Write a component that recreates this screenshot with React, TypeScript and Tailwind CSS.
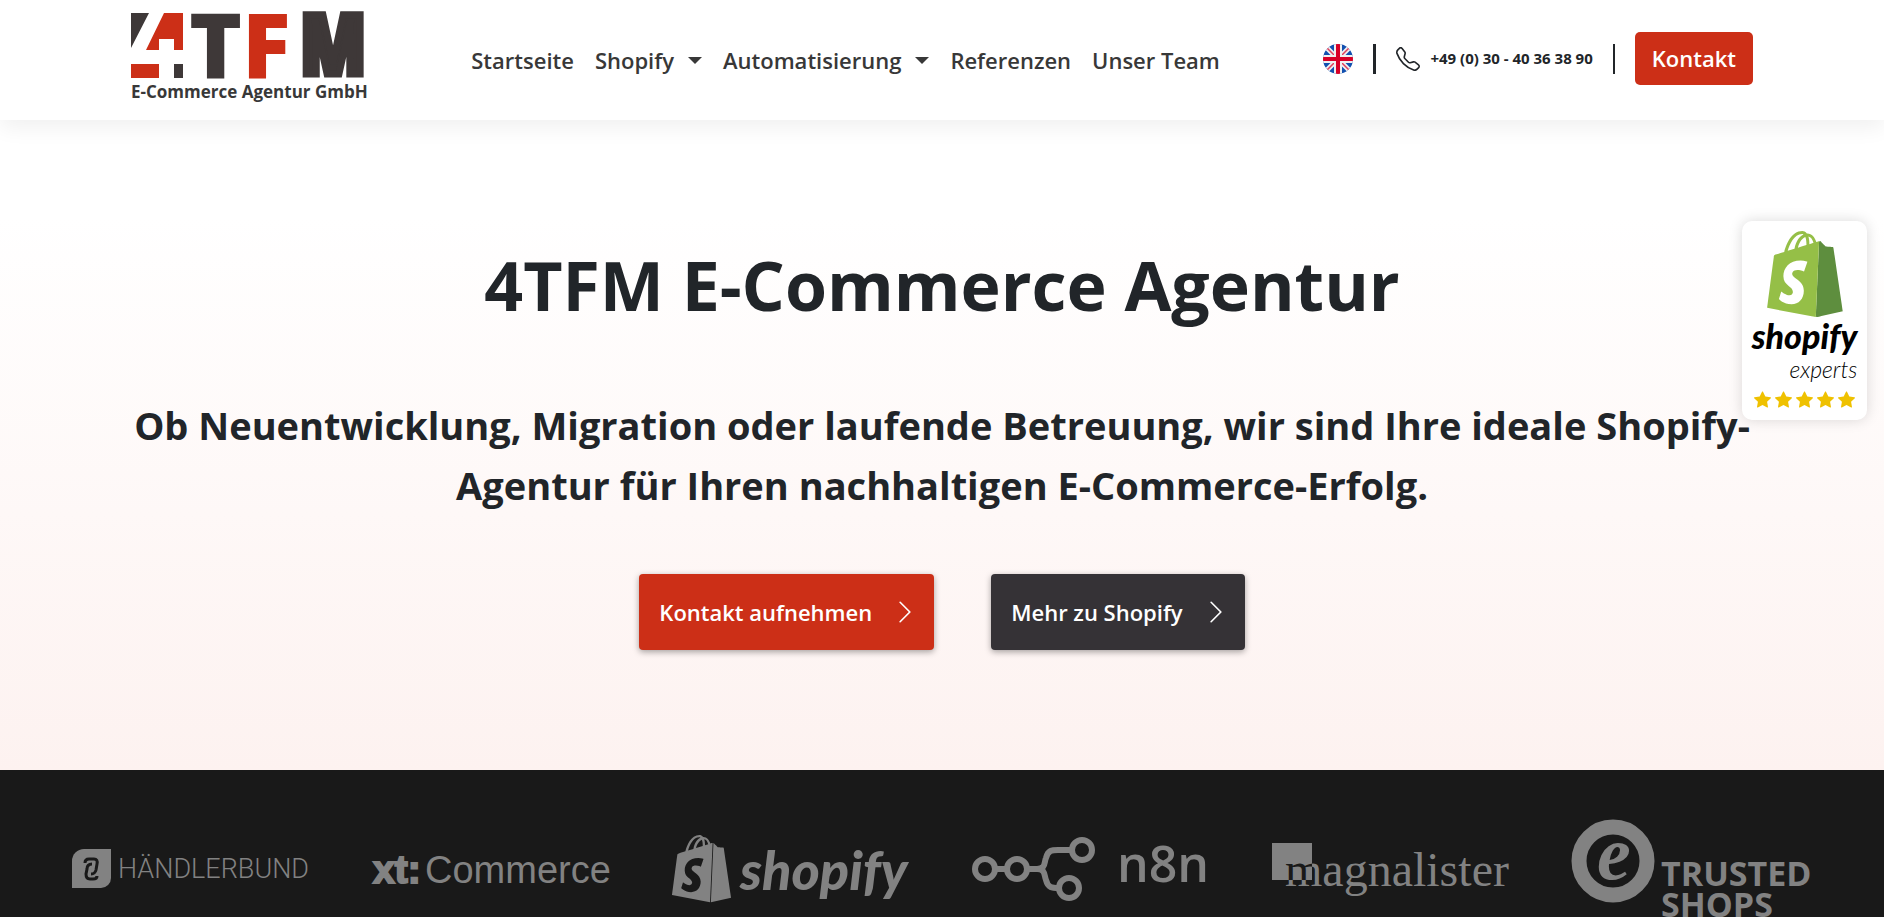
import React from "react"
import { BsTelephone, BsStarFill, BsChevronRight } from "react-icons/bs"

const navItems = [
  { label: "Startseite", dropdown: false },
  { label: "Shopify", dropdown: true },
  { label: "Automatisierung", dropdown: true },
  { label: "Referenzen", dropdown: false },
  { label: "Unser Team", dropdown: false },
]

const BAG_SIDE =
  "M15.337 23.979l7.216-1.561s-2.604-17.613-2.625-17.73c-.018-.116-.114-.192-.211-.192s-1.929-.136-1.929-.136-1.275-1.274-1.439-1.411c-.045-.037-.075-.057-.121-.074l-.914 21.104h.023z"
const BAG_FRONT =
  "M11.71 11.305s-.81-.424-1.774-.424c-1.447 0-1.504.906-1.504 1.141 0 1.232 3.24 1.715 3.24 4.629 0 2.295-1.44 3.76-3.406 3.76-2.354 0-3.54-1.465-3.54-1.465l.646-2.086s1.245 1.066 2.28 1.066c.675 0 .975-.545.975-.932 0-1.619-2.654-1.694-2.654-4.359-.034-2.237 1.571-4.416 4.827-4.416 1.257 0 1.875.361 1.875.361l-.945 2.715-.02.01zM11.17.83c.136 0 .271.038.405.135-.984.465-2.064 1.639-2.508 3.992-.656.213-1.293.405-1.889.578C7.697 3.75 8.951.84 11.17.84V.83zm1.235 2.949v.135c-.754.232-1.583.484-2.394.736.466-1.777 1.333-2.645 2.085-2.971.193.501.309 1.176.309 2.1zm.539-2.234c.694.074 1.141.867 1.429 1.755-.349.114-.735.231-1.158.366v-.252c0-.752-.096-1.371-.271-1.871v.002zm2.992 1.289c-.02 0-.06.021-.078.021s-.289.075-.714.21c-.423-1.233-1.176-2.37-2.508-2.37h-.115C12.135.209 11.669 0 11.265 0 8.159 0 6.675 3.877 6.21 5.846c-1.194.365-2.063.636-2.16.674-.675.213-.694.232-.772.87-.075.462-1.83 14.063-1.83 14.063L15.009 24l.927-21.166z"

function BrandLogo() {
  return (
    <a href="#" className="block shrink-0 text-[#383838]">
      <svg viewBox="0 0 232 65" className="block h-[65px] w-[232px] overflow-visible" role="img" aria-label="4TFM">
        <path d="M0 0H18L0 35ZM43 51h9v14h-9Z" fill="#3e3838" />
        <path d="M33 0H52V37H43V26H28V37H15ZM0 51h28v14H0Z" fill="#cc2f17" />
        <g fontFamily="'Open Sans', sans-serif" fontWeight="800" fontSize="90" fill="#3e3838">
          <text x="58" y="65">T</text>
          <text x="111" y="65" fill="#cc2f17">F</text>
        </g>
        <text
          x="170"
          y="61"
          fontFamily="'Noto Sans Condensed', 'Open Sans Condensed', 'Roboto Condensed', 'Liberation Sans', sans-serif"
          fontWeight="900"
          fontSize="82"
          fill="#3e3838"
          stroke="#3e3838"
          strokeWidth="7"
        >
          M
        </text>
      </svg>
      <span className="block whitespace-nowrap text-[17px] leading-[27px] font-bold">E-Commerce Agentur GmbH</span>
    </a>
  )
}

function UkFlag() {
  return (
    <svg viewBox="0 0 30 30" className="h-[30px] w-[30px]" role="img" aria-label="English">
      <clipPath id="flag-round">
        <circle cx="15" cy="15" r="15" />
      </clipPath>
      <g clipPath="url(#flag-round)">
        <rect width="30" height="30" fill="#1250b0" />
        <path d="M0 0L30 30M30 0L0 30" stroke="#f0f0f0" strokeWidth="5" />
        <path d="M0 0L30 30M30 0L0 30" stroke="#e0405c" strokeWidth="1.5" />
        <path d="M15 0V30M0 15H30" stroke="#f0f0f0" strokeWidth="8" />
        <path d="M15 0V30M0 15H30" stroke="#d80027" strokeWidth="4" />
      </g>
    </svg>
  )
}

function Header() {
  return (
    <header className="relative z-10 bg-white shadow-[0_8px_20px_rgba(0,0,0,0.06)]">
      <div className="mx-auto flex h-[120px] w-full max-w-[1622px] items-center justify-between pb-[3px]">
        <BrandLogo />
        <nav className="flex items-center gap-[21px] pt-[3px] text-[22px] font-semibold text-[#383838]">
          {navItems.map((item) => (
            <a key={item.label} href="#" className="flex items-center gap-[14px] whitespace-nowrap">
              {item.label}
              {item.dropdown && (
                <span className="border-x-[7px] border-t-[7px] border-x-transparent border-t-[#383838]" />
              )}
            </a>
          ))}
        </nav>
        <div className="flex items-center gap-5">
          <a href="#">
            <UkFlag />
          </a>
          <span className="h-[30px] w-[3px] bg-[#212529]" />
          <a href="tel:+493040363890" className="flex items-center gap-[10px] whitespace-nowrap text-[15px] font-bold">
            <BsTelephone className="h-6 w-6" />
            +49 (0) 30 - 40 36 38 90
          </a>
          <span className="h-[30px] w-[2px] bg-[#212529]" />
          <button className="h-[53px] rounded-[5px] bg-[#cc2f17] px-[17px] text-[22px] font-semibold text-white">
            Kontakt
          </button>
        </div>
      </div>
    </header>
  )
}

function Hero() {
  return (
    <section className="bg-linear-to-b from-white from-15% to-[#fdf2f0] text-center">
      <div className="mx-auto flex w-full max-w-[1622px] flex-col items-center pt-[123px] pb-[120px]">
        <h1 className="text-[68px] leading-[84px] font-bold">4TFM E-Commerce Agentur</h1>
        <h2 className="mt-[68px] text-[38px] leading-[60px] font-bold">
          Ob Neuentwicklung, Migration oder laufende Betreuung, wir sind Ihre ideale Shopify-Agentur für Ihren
          nachhaltigen E-Commerce-Erfolg.
        </h2>
        <div className="mt-[59px] flex gap-[57px] text-[22px] font-semibold text-white">
          <button className="flex h-[76px] items-center gap-5 rounded-[4px] bg-[#cc2f17] pr-4 pl-5 shadow-[0_2px_6px_rgba(0,0,0,0.35)]">
            Kontakt aufnehmen
            <BsChevronRight size={26} />
          </button>
          <button className="flex h-[76px] items-center gap-5 rounded-[4px] bg-[#353236] pr-4 pl-5 shadow-[0_2px_6px_rgba(0,0,0,0.35)]">
            Mehr zu Shopify
            <BsChevronRight size={26} />
          </button>
        </div>
      </div>
    </section>
  )
}

function ExpertsBadge() {
  return (
    <aside className="absolute top-[221px] right-[17px] z-20 flex w-[125px] flex-col items-center rounded-[10px] bg-white pt-[10px] pb-3 text-black shadow-[0_0_14px_rgba(0,0,0,0.15)]">
      <svg viewBox="0 0 24 24" className="h-[86px] w-[86px]" aria-hidden="true">
        <path d="M15.009 24L15.936 2.834L16.500 2.900V23.700Z" fill="#5e8e3e" />
        <path d={BAG_FRONT} fill="#95bf47" />
        <path d={BAG_SIDE} fill="#5e8e3e" />
      </svg>
      <div className="flex flex-col items-end font-['Lato',sans-serif] italic">
        <span className="text-[34px] leading-[38px] font-black">shopify</span>
        <span className="text-[23px] leading-7 font-light">experts</span>
      </div>
      <div className="mt-2 flex gap-1 text-[#efc100]">
        {[1, 2, 3, 4, 5].map((n) => (
          <BsStarFill key={n} className="h-[17px] w-[17px]" />
        ))}
      </div>
    </aside>
  )
}

// every partner logo shares one 240x120 canvas
function Partner({ name, children }: { name: string; children: React.ReactNode }) {
  return (
    <li className="px-[30px]">
      <a href="#" aria-label={name}>
        <svg viewBox="0 0 240 120" className="block h-auto w-full overflow-visible fill-[#828282]">
          {children}
        </svg>
      </a>
    </li>
  )
}

function Partners() {
  return (
    <section className="flex-1 border-b border-black bg-[#191919]">
      <ul className="grid grid-cols-6 px-[42px] pt-[40px]">
        <Partner name="Händlerbund">
          <path d="M12 39H39V68A10 10 0 0 1 29 78H0V51A12 12 0 0 1 12 39Z" />
          <path
            d="M13 53Q13 49 17 49H22Q26 49 25 54L24 60Q23 64 19 64"
            fill="none"
            stroke="#191919"
            strokeWidth="3"
          />
          <path
            d="M20 54Q15 54 15 59L14 64Q14 69 18 69H21Q25 69 25 66"
            fill="none"
            stroke="#191919"
            strokeWidth="3"
          />
          <text x="46" y="68" fontFamily="Roboto, sans-serif" fontWeight="300" fontSize="27">
            HÄNDLERBUND
          </text>
        </Partner>
        <Partner name="xt:Commerce">
          <g fontFamily="'Liberation Sans', sans-serif">
            <text x="1" y="73" fontSize="39" fontWeight="700" stroke="#828282" strokeWidth="2">
              xt:
            </text>
            <text x="53" y="73" fontSize="38">
              Commerce
            </text>
          </g>
        </Partner>
        <Partner name="Shopify">
          <g transform="translate(-4 25) scale(2.8)">
            <path d={BAG_FRONT} />
            <path d={BAG_SIDE} />
          </g>
          <text x="68" y="80" fontFamily="Lato, sans-serif" fontWeight="900" fontStyle="italic" fontSize="54">
            shopify
          </text>
        </Partner>
        <Partner name="n8n">
          <g fill="none" stroke="#828282" strokeWidth="6">
            <circle cx="13" cy="59" r="10" />
            <circle cx="45" cy="59" r="10" />
            <circle cx="110" cy="40" r="10" />
            <circle cx="97" cy="78" r="10" />
            <path d="M23 59H35M55 59H65C74 59 72 52 74 48C76 40 80 40 86 40H100" />
            <path d="M65 59C74 59 72 66 74 70C76 78 80 78 87 78" />
          </g>
          <text x="145" y="72" fontFamily="'Open Sans', sans-serif" fontWeight="600" fontSize="50">
            n8n
          </text>
        </Partner>
        <Partner name="magnalister">
          <clipPath id="magna-square">
            <rect y="33" width="40" height="37" />
          </clipPath>
          <rect y="33" width="40" height="37" />
          <text x="13" y="76" fontFamily="'Liberation Serif', serif" fontSize="48">
            magnalister
          </text>
          <text x="13" y="76" fontFamily="'Liberation Serif', serif" fontSize="48" fill="#191919" clipPath="url(#magna-square)" aria-hidden="true">
            m
          </text>
        </Partner>
        <Partner name="Trusted Shops">
          <circle cx="41" cy="51" r="34" fill="none" stroke="#828282" strokeWidth="15" />
          <text x="25" y="69" fontFamily="'Liberation Serif', serif" fontWeight="700" fontStyle="italic" fontSize="76">
            e
          </text>
          <g fontFamily="'Open Sans', sans-serif" fontWeight="700" fontSize="34">
            <text x="89" y="76">TRUSTED</text>
            <text x="89" y="107">SHOPS</text>
          </g>
        </Partner>
      </ul>
    </section>
  )
}

export default function App() {
  return (
    <div className="relative flex h-screen flex-col overflow-hidden font-['Open_Sans','Noto_Sans',sans-serif] text-[#212529]">
      <Header />
      <Hero />
      <ExpertsBadge />
      <Partners />
    </div>
  )
}
